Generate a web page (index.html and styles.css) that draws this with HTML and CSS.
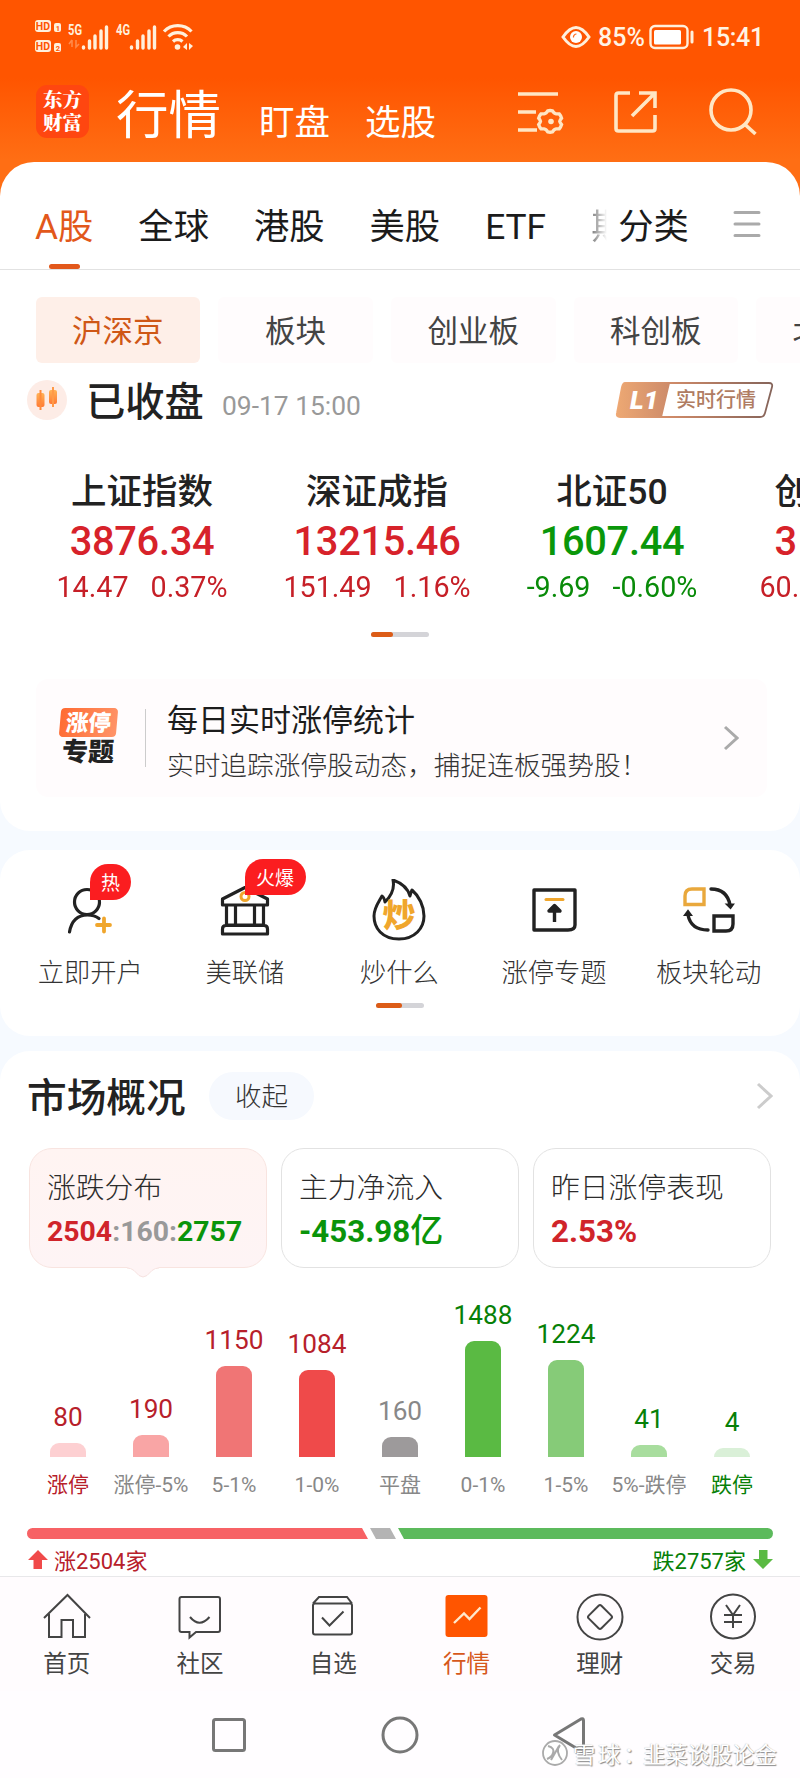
FILE: index.html
```html
<!DOCTYPE html>
<html lang="zh-CN">
<head>
<meta charset="utf-8">
<title>行情</title>
<link rel="stylesheet" href="styles.css">
</head>
<body>
<div class="screen">
  <header class="header">
    <div class="status">
      <svg class="status-left" width="164" height="36" viewBox="0 0 164 36">
        <g fill="#fff0dc">
          <rect x="1" y="1" width="16" height="12" rx="3"/><rect x="20" y="4" width="7" height="9" rx="2"/>
          <rect x="1" y="21" width="16" height="12" rx="3"/><rect x="20" y="24" width="7" height="9" rx="2"/>
          <text class="net" x="34" y="16" textLength="14" lengthAdjust="spacingAndGlyphs">5G</text>
          <text class="net" x="82" y="16" textLength="14" lengthAdjust="spacingAndGlyphs">4G</text>
        </g>
        <g fill="#ff5500">
          <text class="hd" x="1.800" y="11">HD</text><text class="hd hd-n" x="21.700" y="11.500">1</text>
          <text class="hd" x="1.800" y="31">HD</text><text class="hd hd-n" x="21.700" y="31.500">2</text>
        </g>
        <path d="M38 21v7M38 21l-3 4M42 21v7l3-3" stroke="#ff8a4a" stroke-width="1.600" fill="none"/>
        <path d="M49.500 29v-1M55.500 29v-7M61 29v-12M67 29v-17M72.500 29v-21M97.500 29v-1M103.500 29v-7M109 29v-12M115 29v-17M120.500 29v-21" stroke="#fff0dc" stroke-width="3.400" stroke-linecap="round"/>
        <g fill="none" stroke="#fff0dc" stroke-width="3.200"><path d="M130 12.500a19 19 0 0 1 27.500 0M134.500 17.500a13 13 0 0 1 18.500 0M139 22.500a7 7 0 0 1 9.500 0"/></g>
        <circle cx="143.500" cy="28" r="2.800" fill="#fff0dc"/><path d="M149 28l4-4v7zM155 24l4 3-4 4z" fill="#fff0dc"/>
      </svg>
      <svg class="eye" width="30" height="24" viewBox="0 0 30 24"><path d="M2 12Q15-7 28 12Q15 31 2 12Z" fill="none" stroke="#fff0dc" stroke-width="3"/><circle cx="15" cy="12" r="6" fill="#fff"/><path d="M12.500 12.500a3 3 0 0 1 3-3.500" fill="none" stroke="#ff6a20" stroke-width="1.200"/></svg>
      <span class="battery-pct">85%</span>
      <svg class="battery" width="46" height="26" viewBox="0 0 46 26"><rect x="1.500" y="2" width="37" height="22" rx="4.500" fill="none" stroke="#fff0dc" stroke-width="2.400"/><rect x="5" y="6" width="27" height="14.500" rx="1.500" fill="#fff"/><path d="M43 8v10" stroke="#fff0dc" stroke-width="3" stroke-linecap="round"/></svg>
      <span class="clock">15:41</span>
    </div>
    <div class="titlebar">
      <div class="logo"><span>东方</span><span>财富</span></div>
      <span class="title-main">行情</span>
      <span class="title-sub">盯盘</span>
      <span class="title-sub">选股</span>
      <svg class="ic-list" width="48" height="44" viewBox="0 0 48 44" fill="none" stroke="#ffe6c4" stroke-width="3.600"><path d="M1 4h40M1 22h18M1 40h19"/><path d="M31.500 20.500q2.500-.8 5 0q1.500 3 4 3.300h3.300q1.800 2 2.500 4.500q-2 2.500-2 3.500t2 3.500q-.7 2.500-2.500 4.500h-3.300q-2.500.3-4 3.300q-2.500.8-5 0q-1.500-3-4-3.300h-3.300q-1.800-2-2.500-4.500q2-2.500 2-3.500t-2-3.500q.7-2.500 2.500-4.500h3.300q2.500-.3 4-3.300z" transform="translate(1.500 1.800) scale(.93)"/><circle cx="34" cy="31.500" r="2.800" fill="#ffe6c4" stroke="none"/></svg>
      <svg class="ic-share" width="44" height="44" viewBox="0 0 44 44" fill="none" stroke="#ffe6c4" stroke-width="3.600"><path d="M16 3H4.500Q2 3 2 5.500V38.500Q2 41 4.500 41H38.500Q41 41 41 38.500V25M25 3H41V18M40 4L18 26"/></svg>
      <svg class="ic-search" width="48" height="48" viewBox="0 0 48 48" fill="none" stroke="#ffe6c4" stroke-width="3.600"><circle cx="22" cy="22" r="20"/><path d="M36 36.500L46.500 46"/></svg>
    </div>
  </header>

  <section class="panel panel-top">
    <nav class="tabs">
      <span class="tab active">A股</span><span class="tab">全球</span><span class="tab">港股</span><span class="tab">美股</span><span class="tab">ETF</span><span class="tab faded">期</span><span class="tab last">分类</span>
      <svg width="28" height="28" viewBox="0 0 28 28" stroke="#aaa" stroke-width="3" stroke-linecap="round"><path d="M2 2.500H26M2 14H26M2 25.500H26"/></svg>
    </nav>
    <div class="chips">
      <span class="chip on">沪深京</span><span class="chip two">板块</span><span class="chip">创业板</span><span class="chip">科创板</span><span class="chip">北交所</span>
    </div>
    <div class="market-state">
      <svg width="40" height="40" viewBox="0 0 40 40"><defs><linearGradient id="candle" x2="0" y2="1"><stop stop-color="#ffb255"/><stop offset="1" stop-color="#ff7a35"/></linearGradient></defs><circle cx="20" cy="20" r="20" fill="#fdece6"/><rect x="9.500" y="13" width="8" height="14" rx="2" fill="url(#candle)"/><rect x="12.500" y="10" width="2" height="20" fill="#ff8a3c"/><rect x="22" y="10" width="8" height="14" rx="2" fill="url(#candle)"/><rect x="25" y="7" width="2" height="20" fill="#ff9a48"/></svg>
      <span class="state-name">已收盘</span><span class="state-time">09-17 15:00</span>
      <svg class="level" width="160" height="38" viewBox="0 0 160 38">
        <defs><linearGradient id="copper" x2="1"><stop stop-color="#f0aa77"/><stop offset=".35" stop-color="#cf8a68"/><stop offset="1" stop-color="#85645a"/></linearGradient>
        <linearGradient id="copper-fill" x2="1"><stop stop-color="#eda873"/><stop offset="1" stop-color="#cd8b6a"/></linearGradient></defs>
        <path d="M10 2H154Q158 2 157 6L150 32Q149 36 145 36H5Q1 36 2 32L7 6Q8 2 10 2Z" fill="#fff" stroke="url(#copper)" stroke-width="1.800"/>
        <path d="M10 2H55L47 36H5Q1 36 2 32L7 6Q8 2 10 2Z" fill="url(#copper-fill)"/>
        <text class="level-mark" x="15" y="28">L1</text><text class="level-text" x="61" y="26">实时行情</text>
      </svg>
    </div>
    <div class="indices">
      <div class="index up"><b>上证指数</b><strong>3876.34</strong><p><span>14.47</span><span>0.37%</span></p></div>
      <div class="index up"><b>深证成指</b><strong>13215.46</strong><p><span>151.49</span><span>1.16%</span></p></div>
      <div class="index down"><b>北证50</b><strong>1607.44</strong><p><span>-9.69</span><span>-0.60%</span></p></div>
      <div class="index up cut"><b>创</b><strong>3</strong><p><span>60.</span></p></div>
    </div>
    <div class="pager wide"><i></i></div>
    <div class="promo">
      <div class="promo-logo"><span class="promo-top">涨停</span><span class="promo-bottom">专题</span></div>
      <div class="promo-text"><div class="promo-title">每日实时涨停统计</div><div class="promo-sub">实时追踪涨停股动态，捕捉连板强势股！</div></div>
      <svg width="16" height="26" viewBox="0 0 16 26" fill="none" stroke="#aaa" stroke-width="3"><path d="M2 2L14 13L2 24"/></svg>
    </div>
  </section>

  <section class="panel panel-tools">
    <div class="tools">
      <div class="tool">
        <svg width="64" height="64" viewBox="0 0 64 64" fill="none" stroke="#222" stroke-width="3.200" stroke-linecap="round"><circle cx="29" cy="23" r="12.500"/><path d="M11.500 53q3-17 18-17q7 0 11.500 3.500"/><path d="M39 46H52M46 39.500V52.500" stroke="#f0a62c" stroke-width="3.800"/></svg>
        <span class="badge hot">热</span><span>立即开户</span></div>
      <div class="tool">
        <svg width="64" height="64" viewBox="0 0 64 64" fill="none" stroke="#222" stroke-width="3.200" stroke-linejoin="round"><path d="M9.500 26V20L32 8.500L54.500 20V26ZM13.500 27V46H50.500V27M22.500 27V46M41.500 27V46M9.500 55V50Q9.500 46.500 13 46.500H51Q54.500 46.500 54.500 50V55Z"/><circle cx="32" cy="17.500" r="4" stroke="#f0a62c" stroke-width="3"/></svg>
        <span class="badge fire">火爆</span><span>美联储</span></div>
      <div class="tool">
        <svg width="64" height="64" viewBox="0 0 64 64" fill="none"><path d="M32 60C15 60 7 49 7 37C7 29 11 24 15 17Q17 18 18 23C23 18 28 10 26 1C35 4 41 10 43 17Q44 13 45 11C52 17 57 27 57 37C57 49 48 60 32 60Z" stroke="#222" stroke-width="3" stroke-linejoin="round"/><text class="flame-text" x="15.500" y="48">炒</text></svg>
        <span>炒什么</span></div>
      <div class="tool">
        <svg width="64" height="64" viewBox="0 0 64 64" fill="none" stroke="#222" stroke-width="3.400" stroke-linejoin="round"><path d="M12 11H53V46Q53 51 46 51H12Z"/><path d="M24 20.500H41" stroke="#f0a62c" stroke-width="3" stroke-linecap="round"/><path d="M32.500 43V30"/><path d="M27 32L32.500 26.500L38 32Z" fill="#222"/></svg>
        <span>涨停专题</span></div>
      <div class="tool">
        <svg width="64" height="64" viewBox="0 0 64 64" fill="none" stroke="#222" stroke-width="3.400" stroke-linecap="round"><path d="M8 25.500V17Q8 10 15 10H27V25.500Z" stroke="#e9a83c"/><path d="M37 37H56V45Q56 52 49 52H37Z"/><path d="M34 10Q50 10 53 26M31 51Q14 51 11 36"/><path d="M50 25.500H56L53.500 29Z M8 36H14L11 32Z" fill="#222" stroke-width="2"/></svg>
        <span>板块轮动</span></div>
    </div>
    <div class="pager"><i></i></div>
  </section>

  <section class="panel panel-overview">
    <div class="overview-head"><h2>市场概况</h2><span class="fold">收起</span><svg width="17" height="28" viewBox="0 0 17 28" fill="none" stroke="#ccc" stroke-width="3"><path d="M2 2L15 14L2 26"/></svg></div>
    <div class="cards">
      <div class="card selected"><div class="card-label">涨跌分布</div><div class="card-value small"><span class="red">2504</span><span class="grey">:160:</span><span class="green">2757</span></div>
        <svg class="pointer" width="32" height="13" viewBox="0 0 32 12"><path d="M0 0V1Q4 1 7 4L12 9Q16 12 20 9L25 4Q28 1 32 1V0Z" fill="#fef4f5"/><path d="M0 1.500Q4 1.500 7 4L12 9Q16 12 20 9L25 4Q28 1.500 32 1.500" fill="none" stroke="#f6e2e0"/></svg></div>
      <div class="card"><div class="card-label">主力净流入</div><div class="card-value green">-453.98<span class="unit">亿</span></div></div>
      <div class="card"><div class="card-label">昨日涨停表现</div><div class="card-value red">2.53%</div></div>
    </div>
    <div class="chart">
      <div class="col rise"><em>80</em><i class="c1" style="height:14px"></i><span class="edge">涨停</span></div>
      <div class="col rise"><em>190</em><i class="c2" style="height:22px"></i><span>涨停-5%</span></div>
      <div class="col rise"><em>1150</em><i class="c3" style="height:91px"></i><span>5-1%</span></div>
      <div class="col rise"><em>1084</em><i class="c4" style="height:87px"></i><span>1-0%</span></div>
      <div class="col flat"><em>160</em><i class="c5" style="height:20px"></i><span>平盘</span></div>
      <div class="col fall"><em>1488</em><i class="c6" style="height:116px"></i><span>0-1%</span></div>
      <div class="col fall"><em>1224</em><i class="c7" style="height:97px"></i><span>1-5%</span></div>
      <div class="col fall"><em>41</em><i class="c8" style="height:12px"></i><span>5%-跌停</span></div>
      <div class="col fall"><em>4</em><i class="c9" style="height:9px"></i><span class="edge">跌停</span></div>
    </div>
    <svg class="ratio" width="746" height="11" viewBox="0 0 746 11"><path d="M5.500 0H335L341 11H5.500A5.500 5.500 0 0 1 5.500 0Z" fill="#f76265"/><path d="M343 0H363L369 11H349Z" fill="#b4b4b4"/><path d="M371 0H740.500A5.500 5.500 0 0 1 740.500 11H377Z" fill="#5cba5c"/></svg>
    <div class="totals">
      <svg class="arrow-up" width="20" height="20" viewBox="0 0 20 20"><path d="M10 0L20 10H14V19H5.500V10H0Z" fill="#f04a4a"/></svg><span class="total-up">涨2504家</span>
      <span class="total-down">跌2757家</span><svg width="20" height="20" viewBox="0 0 20 20"><path d="M10 19L20 9H14.500V0H6V9H0Z" fill="#5aba43"/></svg>
    </div>
  </section>

  <nav class="bottom">
    <div class="nav"><svg width="48" height="48" viewBox="0 0 48 48"><path d="M1 25L24.500 2L47 25M6 21V44H18.500V27H30V44H42V21"/></svg>首页</div>
    <div class="nav"><svg width="48" height="48" viewBox="0 0 48 48"><path d="M5.500 4H42Q44 4 44 6V37Q44 39 42 39H20L13.500 44.500V39H5.500Q3.500 39 3.500 37V6Q3.500 4 5.500 4ZM14 24Q23.500 35.500 33.500 24"/></svg>社区</div>
    <div class="nav"><svg width="48" height="48" viewBox="0 0 48 48"><path d="M4 10.500L10 4H38L43 10.500M6 10.500H41Q43 10.500 43 12.500V39.500Q43 41.500 41 41.500H6Q4 41.500 4 39.500V12.500Q4 10.500 6 10.500ZM13 24.500L20.500 32.500L34.500 18.500"/></svg>自选</div>
    <div class="nav current"><svg width="48" height="48" viewBox="0 0 48 48"><rect x="2.500" y="2" width="42" height="42" rx="3" fill="#ff5500" stroke="none"/><path d="M11 30L21 20.500L26.500 26L37.500 14.500" stroke="#ffe8cc" stroke-width="2.400"/></svg>行情</div>
    <div class="nav"><svg width="48" height="48" viewBox="0 0 48 48"><circle cx="24" cy="24" r="22.500"/><rect x="15" y="15" width="18" height="18" rx="2" transform="rotate(45 24 24)"/></svg>理财</div>
    <div class="nav"><svg width="48" height="48" viewBox="0 0 48 48"><circle cx="24" cy="23.500" r="22"/><path d="M17 12L24 22L31 12M15 22H33M15 29H33M24 22V35"/></svg>交易</div>
  </nav>
  <footer class="system">
    <svg width="400" height="44" viewBox="0 0 400 44" fill="none" stroke="#777" stroke-width="3"><rect x="13.500" y="6.500" width="31" height="31" rx="2"/><circle cx="200" cy="22" r="17"/><path d="M355 22L381.500 6Q384 5 384 7.500V37Q384 39 381.500 38Z" stroke-linejoin="round" transform="translate(-.5 0)"/></svg>
    <div class="watermark"><svg width="28" height="28" viewBox="0 0 28 28" fill="none" stroke="#aaa"><circle cx="14" cy="14" r="12" fill="#fff" stroke-width="1.800"/><path d="M7 7Q14 9 12 14Q11 18 6 20M19 6Q14 12 21 21M10 21L18 7" stroke-width="2"/></svg><span>雪球：</span><span>韭菜谈股论金</span></div>
  </footer>
</div>
</body>
</html>
```
FILE: styles.css
```css
* { box-sizing: border-box; }
body { margin: 0; font-family: Roboto, "Noto Sans CJK SC", sans-serif; color: #222; }
svg { display: block; flex: none; }
.screen { width: 800px; height: 1778px; overflow: hidden; background: #f6faff; }

.header { height: 204px; background: linear-gradient(#ff5500 0 78px, #ff6e14 160px); color: #fff; }
.status { height: 76px; padding: 0 0 2px 34px; display: flex; align-items: center; }
.net { font: 700 15px Roboto, sans-serif; }
.hd { font: 700 10.500px Roboto, sans-serif; }
.hd-n { font-size: 7.500px; }
.eye { margin-left: 363px; }
.battery-pct, .clock { font-size: 25px; font-weight: 500; color: #fff3e4; white-space: nowrap; }
.battery-pct { width: 51px; margin-left: 7px; }
.clock { margin-left: 7px; letter-spacing: -.3px; }
.titlebar { display: flex; height: 86px; padding-left: 36px; }
.logo { width: 53px; height: 53px; margin-top: 9px; padding-top: 3px; border-radius: 11px; background: #ff4610; display: flex; flex-direction: column; align-items: center; font: 900 19.500px/23px "Noto Serif CJK SC", "Noto Sans CJK SC", serif; }
.title-main { font-size: 52.500px; line-height: 80px; margin-left: 27px; width: 104px; white-space: nowrap; }
.title-sub { font-size: 35.500px; line-height: 94px; margin-left: 36px; width: 70px; white-space: nowrap; }
.title-main + .title-sub { margin-left: 39px; }
.ic-list { margin: 14px 0 0 82px; }
.ic-share { margin: 14px 0 0 49px; }
.ic-search { margin: 12px 0 0 51px; }

.panel { background: #fff; overflow: hidden; }
.panel-top { margin-top: -42px; height: 669px; border-radius: 34px 34px 30px 30px; }
.tabs { height: 108px; border-bottom: 1px solid #e2e2e2; padding-left: 35px; display: flex; align-items: center; font-size: 35.300px; }
.tab { height: 107px; line-height: 130px; margin-right: 45px; white-space: nowrap; color: #1b1b1b; display: flex; flex-direction: column; }
.tab.active { color: #e2581b; }
.tab.active::after { content: ""; width: 31px; height: 5px; border-radius: 3px; background: #e2581b; margin: -28px auto 0; }
.tab.faded { width: 16px; overflow: hidden; margin-right: 11px; color: transparent; background: linear-gradient(90deg, #777, #fff); -webkit-background-clip: text; background-clip: text; }
.tab.last { margin-right: 44px; }
.tabs svg { margin-top: 17px; }
.chips { display: flex; gap: 18px; padding: 27px 0 0 35.500px; }
.chip { flex: none; width: 164.500px; height: 66px; line-height: 70px; border-radius: 6px; background: #fffcfd; text-align: center; font-size: 30.500px; color: #444; }
.chip.on { background: #feefe8; color: #cf5716; }
.chip.two { width: 155px; }
.market-state { display: flex; align-items: center; height: 40px; margin-top: 17px; padding-left: 27px; white-space: nowrap; }
.state-name { font-size: 39.300px; font-weight: 500; margin: -4px 0 0 19px; width: 118px; }
.state-time { font-size: 26.400px; color: #999; margin: 11px 0 0 18px; width: 140px; }
.level { margin-left: 253px; }
.level-mark { font: italic 900 26px Roboto, sans-serif; fill: #fff; }
.level-text { font: 500 20px "Noto Sans CJK SC", sans-serif; fill: #b07c62; }
.indices { display: flex; margin: 47px 0 0 24.500px; height: 165px; }
.index { flex: none; width: 235px; text-align: center; white-space: nowrap; }
.index b { display: block; font-size: 35.500px; font-weight: 500; line-height: 50px; }
.index strong { display: block; font-size: 39.800px; font-weight: 500; letter-spacing: -.3px; line-height: 50px; }
.index p { margin: 0; display: flex; gap: 22px; justify-content: center; font-size: 28.700px; line-height: 40px; }
.up { color: #d7222a; }
.down { color: #0a970a; }
.index b { color: #222; }
.index p { filter: brightness(.92); }
.index.cut { width: 71px; text-align: left; padding-left: 45px; }
.cut p { justify-content: flex-start; margin-left: -15px; }
.pager { width: 48px; height: 5px; margin: 0 auto; border-radius: 3px; background: #d4d4d8; }
.pager i { display: block; width: 26px; height: 5px; border-radius: 3px; background: #dc5c17; }
.pager.wide { width: 58px; }
.pager.wide i { width: 22px; }
.promo { margin: 42px 33px 0 36px; height: 118px; border-radius: 12px; background: #fffcfd; display: flex; align-items: center; padding: 0 28px 0 22px; white-space: nowrap; }
.promo-logo { width: 60px; display: flex; flex-direction: column; font-weight: 900; align-items: center; }
.promo-top { width: 57px; height: 29px; transform: skewX(-5deg); border-radius: 4px; background: linear-gradient(100deg, #ff6b32, #ff9468); color: #fff; font-size: 22.500px; line-height: 30px; text-align: center; }
.promo-bottom { font-size: 26px; line-height: 31px; transform: skewX(-2deg); }
.promo-text { margin-left: 27px; border-left: 1px solid #ccc; height: 58px; padding-left: 21px; flex: 1; }
.promo-title { font-size: 31px; line-height: 40px; margin-top: -8px; color: #1c1c1c; }
.promo-sub { font-size: 26.700px; line-height: 40px; margin-top: 5px; color: #333; font-weight: 300; }

.panel-tools { margin-top: 19px; height: 186px; border-radius: 30px; }
.tools { display: grid; grid-template-columns: repeat(5, 154.600px); padding-left: 13px; height: 153px; }
.tool { position: relative; display: flex; flex-direction: column; align-items: center; padding-top: 29px; font-size: 26.300px; line-height: 38px; color: #333; font-weight: 300; }
.tool > svg { margin-bottom: 11px; }
.badge { position: absolute; background: #fb1d20; color: #fff; text-align: center; border-radius: 18px 18px 18px 0; font-size: 19px; font-weight: 400; height: 36px; line-height: 39px; }
.badge.hot { left: 77px; top: 14px; width: 41px; }
.badge.fire { left: 77px; top: 9px; width: 61px; }
.flame-text { font: 900 33px "Noto Sans CJK SC", sans-serif; fill: #f0a62c; }

.panel-overview { margin-top: 15px; height: 525px; border-radius: 30px 30px 0 0; padding: 0 27px; }
.overview-head { display: flex; align-items: center; padding-top: 20px; height: 70px; }
.overview-head h2 { margin: 6px 0 0; font-size: 39.700px; font-weight: 500; width: 160px; white-space: nowrap; line-height: 50px; }
.fold { width: 106px; height: 48px; border-radius: 24px; background: #f6f9fe; color: #333; font-size: 26.500px; line-height: 50px; text-align: center; margin-left: 23px; font-weight: 300; }
.overview-head svg { margin-left: 442px; }
.cards { display: flex; gap: 14px; margin: 27px 0 0 2px; }
.card { position: relative; width: 238px; height: 120px; border: 1px solid #e2e2e2; border-radius: 23px; padding: 19px 0 0 17px; white-space: nowrap; }
.card.selected { background: linear-gradient(#fff4f2, #fef4f5); border-color: #f8e4e0; }
.pointer { position: absolute; left: 97px; top: 117px; }
.card-label { font-size: 28.800px; line-height: 40px; color: #2c2c2c; font-weight: 300; }
.card-value { font-size: 31.300px; font-weight: 700; line-height: 48px; height: 47px; }
.card-value.small { font-size: 28.400px; }
.unit { font-weight: 500; font-size: 33px; line-height: 1; }
.red { color: #d0242a; }
.green { color: #0a940a; }
.grey { color: #999; }
.chart { display: grid; grid-template-columns: repeat(9, 83px); height: 232px; margin-left: -.5px; align-items: end; }
.col { display: flex; flex-direction: column; align-items: center; white-space: nowrap; }
.col em { font-style: normal; font-size: 26.200px; line-height: 30px; margin-bottom: 11px; }
.col i { width: 36px; border-radius: 9px 9px 0 0; }
.col span { font-size: 21px; line-height: 30px; margin-top: 13px; color: #888; }
.rise em, .rise .edge { color: #b7202a; }
.fall em, .fall .edge { color: #078007; }
.flat em { color: #888; }
.c1 { background: #fdd0d2; } .c2 { background: #f9a5a5; } .c3 { background: #f07575; } .c4 { background: #ef4a4a; }
.c5 { background: #9d9a9b; } .c6 { background: #5aba43; } .c7 { background: #86cb78; } .c8 { background: #a8dd9e; } .c9 { background: #daf0d8; }
.ratio { margin-top: 28px; }
.totals { display: flex; align-items: center; height: 39px; padding-left: 1px; font-size: 22px; white-space: nowrap; }
.totals svg { margin-top: 3px; }
.total-up { margin-left: 6px; width: 300px; color: #b7202a; }
.total-down { margin: 0 7px 0 auto; color: #078007; }

.bottom { height: 115px; background: #fffcfe; border-top: 1px solid #e8e8ea; display: grid; grid-template-columns: repeat(6, 133.300px); }
.nav { display: flex; flex-direction: column; align-items: center; padding-top: 16px; font-size: 23.500px; line-height: 34px; color: #444; }
.nav svg { fill: none; stroke: #444; stroke-width: 2; margin-bottom: 6px; }
.nav.current { color: #d6581b; }
.system { position: relative; height: 88px; background: #fffdff; padding: 22px 200px 0; }
.watermark { position: absolute; left: 541px; top: 48px; height: 28px; display: flex; align-items: center; font-size: 22.300px; color: #fff; white-space: nowrap; text-shadow: 1px 1px 1px #888, -0.500px -0.500px 1px #ccc; }
.watermark span:nth-child(2) { margin-left: 4px; width: 70px; letter-spacing: 3px; }
```
